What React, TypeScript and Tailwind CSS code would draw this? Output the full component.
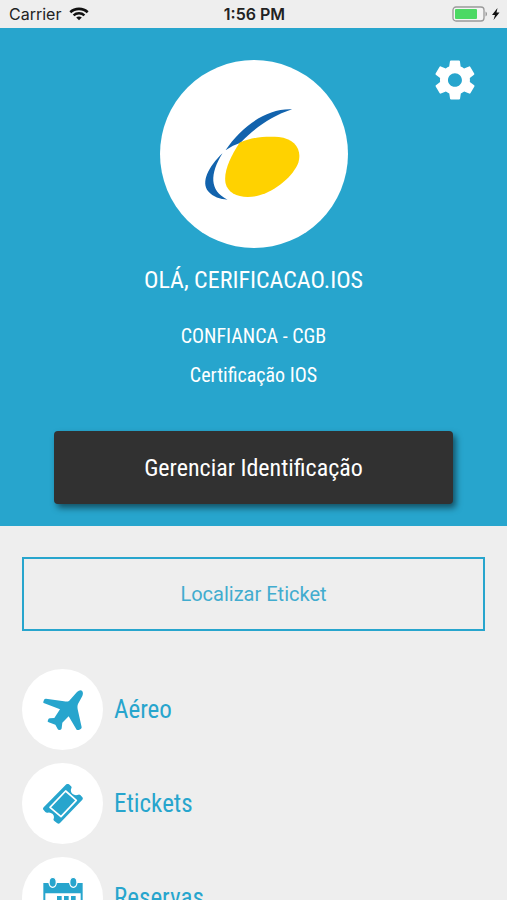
import type { ReactNode } from "react";
import { IoMdSettings } from "react-icons/io";

const condensed = "font-['Roboto_Condensed','Liberation_Sans_Narrow',Roboto,sans-serif]";

function WifiIcon() {
  return (
    <svg viewBox="0 0 20 14" className="h-[14px] w-5" aria-hidden="true" fill="none" stroke="#111">
      <path d="M1.3 5.2C6 .7 14 .7 18.7 5.2" strokeWidth="2.6" />
      <path d="M4.6 8.4c3-2.8 7.800-2.800 10.800 0" strokeWidth="2.400" />
      <path d="M10 13.300 7.200 10.500c1.600-1.400 4-1.400 5.600 0z" fill="#111" stroke="none" />
    </svg>
  );
}

function BatteryIcon() {
  return (
    <svg viewBox="0 0 48 16" className="h-4 w-12" aria-hidden="true">
      <rect x="1" y="1" width="31" height="14" rx="3" fill="#f4f4f4" stroke="#999" strokeWidth="1.300" />
      <rect x="3" y="3" width="22" height="10" rx="1" fill="#4cd964" />
      <path d="M33.500 5.500c2 .8 2 4.200 0 5z" fill="#999" />
      <path d="m45.500 2-5.500 7h3l-1.500 5 6-7.500h-3z" fill="#111" />
    </svg>
  );
}

function BrandLogo() {
  return (
    <svg viewBox="0 0 188 188" className="size-full" role="img" aria-label="Confianca">
      <g transform="translate(-10.500 -10) scale(.3333)">
        <path
          d="M428 178C352 174 275 230 228 301c15-11 30-18 45-23 42-43 91-79 155-100Z"
          fill="#1263ad"
        />
        <path d="M219 310c-43 41-65 87-43 114 15 17 36 24 58 25-55-27-53-78-15-139Z" fill="#1263ad" />
        <path
          d="M270 278c36-16 77-20 118-17 47 5 70 37 59 76-15 42-69 86-117 99-48 13-94 0-102-37-6-36 15-79 42-121Z"
          fill="#ffd200"
        />
      </g>
    </svg>
  );
}

function PlaneIcon() {
  return (
    <svg viewBox="0 0 120 120" className="size-10" aria-hidden="true" fill="#27a5cd">
      <path d="M78 33 102 6q8-7 15-4 5 6 1 16l-13 24c-2 6-2 10-1 16l12 54q0 4-3 5l-7 4q-4 1-6-3L77 79 58 98l-2 17q0 3-3 4l-4 1q-4 0-5-3l-7-13-20-7q-4-1-3-4l2-5q1-3 5-3l13-1 17-26L4 40q-4-1-3-5l2-5q1-4 6-4l54 8q9 2 15-1Z" />
    </svg>
  );
}

function TicketIcon() {
  return (
    <svg viewBox="0 0 120 120" className="size-10" aria-hidden="true">
      <path
        d="M70 1q4-3 8 0l6 6q3 3 1 6-4 9 3 16 8 7 18 3 3-1 6 1l6 7q3 3 0 7l-67 70q-4 4-8 1l-9-7q-4-3-2-7 3-8-3-14-7-6-15-4-4 1-7-2l-5-6q-4-4 0-8Z"
        fill="#27a5cd"
      />
      <path d="M68 21 100 49 54 98 21 70Z" fill="none" stroke="#fff" strokeWidth="5" strokeLinejoin="round" />
    </svg>
  );
}

function CalendarIcon() {
  return (
    <svg viewBox="0 0 120 120" className="size-10 overflow-visible" aria-hidden="true">
      <path d="M1 15h118v103H1Z" fill="#27a5cd" />
      <path d="M7 46h106v66H7Z" fill="#fff" />
      <g fill="#27a5cd" stroke="#fff" strokeWidth="4">
        <ellipse cx="29" cy="13" rx="11" ry="15" />
        <ellipse cx="91" cy="13" rx="11" ry="15" />
      </g>
      <path
        d="M42 54h14v14H42zM63 54h14v14H63zM84 54h14v14H84zM21 74h14v14H21zM42 74h14v14H42zM63 74h14v14H63zM84 74h14v14H84zM21 93h14v14H21zM42 93h14v14H42zM63 93h14v14H63z"
        fill="#27a5cd"
      />
    </svg>
  );
}

function MenuItem({ icon, label }: { icon: ReactNode; label: string }) {
  return (
    <li>
      <a href="#" className="flex items-center gap-[11px]">
        <span className="flex size-[81px] shrink-0 items-center justify-center rounded-full bg-white">{icon}</span>
        <span className={`text-[25px] leading-8 text-[#27a5cd] ${condensed}`}>{label}</span>
      </a>
    </li>
  );
}

export default function App() {
  return (
    <div className="flex h-screen flex-col overflow-hidden bg-[#eee] font-[Inter,sans-serif]">
      <header className="grid h-7 shrink-0 grid-cols-3 items-center pr-[7px] pl-[9px] text-base leading-5 text-[#222]">
        <div className="flex items-center gap-2">
          <span>Carrier</span>
          <WifiIcon />
        </div>
        <span className="text-center font-semibold text-[#222]">1:56 PM</span>
        <div className="flex justify-end">
          <BatteryIcon />
        </div>
      </header>

      <main className="flex-1 overflow-y-auto [scrollbar-width:none]">
        <section
          className={`relative flex flex-col items-center bg-[#27a5cd] px-[54px] pt-8 pb-[22px] text-center text-white ${condensed}`}
        >
          <button type="button" aria-label="Configurações" className="absolute top-7 right-7">
            <IoMdSettings className="size-12" />
          </button>
          <div className="size-[188px] overflow-hidden rounded-full bg-white">
            <BrandLogo />
          </div>
          <h1 className="mt-4 text-2xl leading-8">OLÁ, CERIFICACAO.IOS</h1>
          <p className="mt-[26px] text-xl leading-7">CONFIANCA - CGB</p>
          <p className="mt-[11px] text-xl leading-7">Certificação IOS</p>
          <button
            type="button"
            className="mt-[42px] h-[73px] w-full rounded-sm bg-[#313131] text-2xl leading-8 shadow-[3px_4px_6px_rgba(0,0,0,0.5)]"
          >
            Gerenciar Identificação
          </button>
        </section>

        <div className="px-[22px] pt-[31px] pb-6">
          <button
            type="button"
            className="h-[74px] w-full border-2 border-[#27a5cd] font-[Roboto,sans-serif] text-xl text-[#41accf]"
          >
            Localizar Eticket
          </button>
          <nav className="mt-[38px]">
            <ul className="flex flex-col gap-[13px]">
              <MenuItem icon={<PlaneIcon />} label="Aéreo" />
              <MenuItem icon={<TicketIcon />} label="Etickets" />
              <MenuItem icon={<CalendarIcon />} label="Reservas" />
            </ul>
          </nav>
        </div>
      </main>
    </div>
  );
}
